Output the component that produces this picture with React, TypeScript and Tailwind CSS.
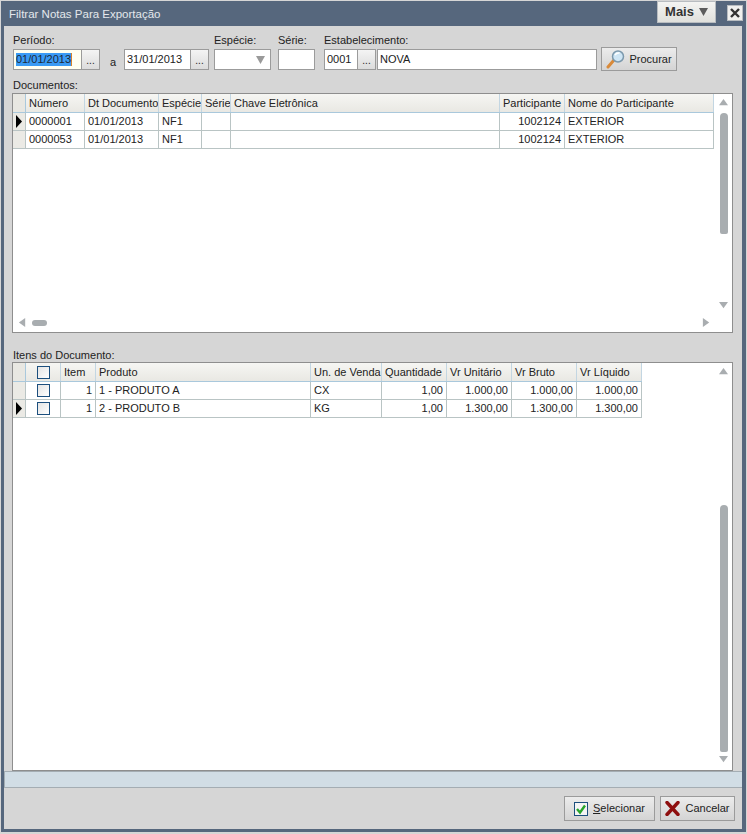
import type { ReactNode } from 'react';

interface Column {
  label: ReactNode;
  width: number;
  align?: 'left' | 'right' | 'center';
}

type Cell = ReactNode;

const docColumns: Column[] = [
  { label: 'Número', width: 59 },
  { label: 'Dt Documento', width: 74 },
  { label: 'Espécie', width: 43 },
  { label: 'Série', width: 29 },
  { label: 'Chave Eletrônica', width: 269 },
  { label: 'Participante', width: 65, align: 'right' },
  { label: 'Nome do Participante', width: 149 },
];

const docRows: Cell[][] = [
  ['0000001', '01/01/2013', 'NF1', '', '', '1002124', 'EXTERIOR'],
  ['0000053', '01/01/2013', 'NF1', '', '', '1002124', 'EXTERIOR'],
];

const CheckBox = () => (
  <span className="block h-[13px] w-[13px] border border-[#1c4f7e] bg-gradient-to-br from-[#e4e4e4] to-white" />
);

const itemColumns: Column[] = [
  { label: <CheckBox />, width: 35, align: 'center' },
  { label: 'Item', width: 35 },
  { label: 'Produto', width: 215 },
  { label: 'Un. de Venda', width: 71 },
  { label: 'Quantidade', width: 65 },
  { label: 'Vr Unitário', width: 65 },
  { label: 'Vr Bruto', width: 65 },
  { label: 'Vr Líquido', width: 65 },
];

const itemAligns: Array<'left' | 'right' | 'center'> = ['center', 'right', 'left', 'left', 'right', 'right', 'right', 'right'];

const itemRows: Cell[][] = [
  [<CheckBox key="a" />, '1', '1 - PRODUTO A', 'CX', '1,00', '1.000,00', '1.000,00', '1.000,00'],
  [<CheckBox key="b" />, '1', '2 - PRODUTO B', 'KG', '1,00', '1.300,00', '1.300,00', '1.300,00'],
];

const Arrow = ({ dir }: { dir: 'up' | 'down' | 'left' | 'right' }) => {
  const points = {
    up: '0,8 5,1 10,8',
    down: '0,1 5,8 10,1',
    left: '8,0 1,5 8,10',
    right: '1,0 8,5 1,10',
  }[dir];
  return (
    <svg className="h-[9px] w-[9px] shrink-0" viewBox="0 0 10 10">
      <polygon fill="#a9adb0" points={points} />
    </svg>
  );
};

const DataGrid = ({
  aligns,
  columns,
  current,
  rows,
}: {
  aligns?: Array<'left' | 'right' | 'center'>;
  columns: Column[];
  current: number;
  rows: Cell[][];
}) => (
  <div className="w-fit">
    <div className="flex h-[19px] border-b border-[#a9c8dc] bg-gradient-to-b from-[#f6f6f3] to-[#e9e8e3]">
      <div className="w-[13px] shrink-0 border-r border-[#a9c8dc] bg-[#e8e7e2]" />
      {columns.map((column, i) => (
        <div
          className={`flex shrink-0 items-center overflow-hidden whitespace-nowrap border-r border-[#c3d6e2] ${
            column.align === 'center' ? 'justify-center' : 'pl-[3px]'
          }`}
          key={i}
          style={{ width: column.width }}
        >
          {column.label}
        </div>
      ))}
    </div>
    {rows.map((row, r) => (
      <div className="flex h-[18px] border-b border-[#b9c4c4]" key={r}>
        <div className="flex w-[13px] shrink-0 items-center justify-center border-r border-[#b9c4c4] bg-[#ebeae5]">
          {r === current && (
            <svg className="h-[13px] w-[8px]" viewBox="0 0 8 13">
              <polygon fill="#000" points="1,0 7,6.5 1,13" />
            </svg>
          )}
        </div>
        {row.map((cell, c) => {
          const align = aligns ? aligns[c] : columns[c].align;
          return (
            <div
              className={`flex shrink-0 items-center overflow-hidden whitespace-nowrap border-r border-[#b9c4c4] px-[3px] ${
                align === 'right' ? 'justify-end' : align === 'center' ? 'justify-center' : ''
              }`}
              key={c}
              style={{ width: columns[c].width }}
            >
              {cell}
            </div>
          );
        })}
      </div>
    ))}
  </div>
);

const VScroll = ({ after, before, thumb }: { after: number; before: number; thumb: number }) => (
  <div className="flex w-[17px] shrink-0 flex-col items-center pt-[4px]">
    <Arrow dir="up" />
    <div className="w-[8px] shrink-0" style={{ height: before }} />
    <div className="w-[8px] shrink-0 rounded-t-[4px] rounded-b-[2px] bg-[#a8adb0]" style={{ height: thumb }} />
    <div className="w-[8px] shrink-0" style={{ height: after }} />
    <Arrow dir="down" />
  </div>
);

const DotsButton = () => (
  <div className="flex h-[21px] w-[18px] shrink-0 items-end justify-center border-y border-r border-[#9b9b9b] bg-gradient-to-b from-[#f4f4f4] to-[#dcdcdc] pb-[3px] text-[10px] leading-[10px]">
    ...
  </div>
);

const Field = ({ label, children, className }: { label: string; children: ReactNode; className: string }) => (
  <div className={className}>
    <div className="h-[15px] whitespace-nowrap leading-[12px]">{label}</div>
    <div className="flex h-[21px]">{children}</div>
  </div>
);

const inputClass = 'flex h-[21px] items-center border border-[#9b9b9b] bg-white px-[2px] whitespace-nowrap';

const Magnifier = () => (
  <svg className="h-[20px] w-[20px]" viewBox="0 0 20 20">
    <path d="M2 18 L8 11" stroke="#d98a3a" strokeLinecap="round" strokeWidth="3" />
    <circle cx="12" cy="7.5" fill="#cfe6f5" r="5.5" stroke="#7c99ad" strokeWidth="1.5" />
    <path d="M9 6 Q10.5 3.5 13.5 4" fill="none" stroke="#fff" strokeWidth="1.5" />
  </svg>
);

const CheckIcon = () => (
  <svg className="h-[14px] w-[14px]" viewBox="0 0 14 14">
    <rect fill="#f4f4f4" height="13" stroke="#1c4f7e" width="13" x="0.5" y="0.5" />
    <path d="M3 7 L6 10.5 L11 3.5" fill="none" stroke="#27a52b" strokeWidth="2.4" />
  </svg>
);

const CrossIcon = () => (
  <svg className="h-[15px] w-[15px]" viewBox="0 0 15 15">
    <path d="M2 1.5 L13 13.5 M13 1.5 L2 13.5" stroke="#8e0f0f" strokeLinecap="round" strokeWidth="3.4" />
  </svg>
);

const FooterButton = ({ children, width }: { children: ReactNode; width: number }) => (
  <div
    className="flex h-[25px] items-center justify-center gap-[5px] border border-[#9b9b9b] bg-gradient-to-b from-[#ececec] to-[#d4d4d4]"
    style={{ width }}
  >
    {children}
  </div>
);

export default function App() {
  return (
    <div className="h-[834px] w-[747px] overflow-hidden bg-[#d6d6d6] pl-[1px] pt-[1px] font-['Liberation_Sans',sans-serif] text-[11px] text-[#222]">
      <div className="flex h-[831px] w-[745px] flex-col border-x-[3px] border-b-[3px] border-r-[4px] border-[#56677d]">
        <div className="flex h-[25px] shrink-0 items-start justify-between bg-[#56677d]">
          <div className="pl-[5px] pt-[6px] text-[11.5px] leading-[15px] text-[#e4e8ec]">
            Filtrar Notas Para Exportação
          </div>
          <div className="flex items-start">
            <div className="flex h-[22px] w-[59px] items-center justify-center gap-[5px] border border-[#b8bcc0] bg-gradient-to-b from-[#f4f4f2] to-[#e0e0dc] text-[13px] font-semibold text-[#333]">
              Mais
              <svg className="h-[8px] w-[9px]" viewBox="0 0 9 8">
                <polygon fill="#5c5c5c" points="0,0 9,0 4.5,8" />
              </svg>
            </div>
            <div className="ml-[11px] mr-[-1px] mt-[4px] flex h-[16px] w-[16px] items-center justify-center border border-[#b8bcc0] bg-[#f0f0ee]">
              <svg className="h-[10px] w-[10px]" viewBox="0 0 10 10">
                <path d="M1 1 L9 9 M9 1 L1 9" stroke="#333" strokeWidth="2.4" />
              </svg>
            </div>
          </div>
        </div>

        <div className="flex min-h-0 flex-1 flex-col bg-[#d6d6d6]">
          <div className="flex h-[38px] shrink-0 items-start pl-[9px] pt-[8px]">
            <Field className="w-[96px]" label="Período:">
              <div className="flex h-[21px] w-[69px] items-center border border-[#9b9b9b] bg-[#fffff2] px-[2px]">
                <span className="border-r border-[#d9822b] bg-[#3a9bf5] leading-[13px] text-[#1d2a38]">01/01/2013</span>
              </div>
              <DotsButton />
            </Field>
            <div className="w-[15px] pl-[1px] pt-[20px] leading-[16px]">a</div>
            <Field className="w-[90px]" label=" ">
              <div className={`${inputClass} w-[67px]`}>31/01/2013</div>
              <DotsButton />
            </Field>
            <Field className="w-[64px]" label="Espécie:">
              <div className={`${inputClass} w-[57px] justify-end pr-[5px]`}>
                <svg className="h-[8px] w-[9px]" viewBox="0 0 9 8">
                  <polygon fill="#9a9a9a" points="0,0 9,0 4.5,8" />
                </svg>
              </div>
            </Field>
            <Field className="w-[46px]" label="Série:">
              <div className={`${inputClass} w-[37px]`} />
            </Field>
            <Field className="w-[277px]" label="Estabelecimento:">
              <div className={`${inputClass} w-[34px]`}>0001</div>
              <DotsButton />
              <div className={`${inputClass} ml-[1px] w-[220px]`}>NOVA</div>
            </Field>
            <div className="mt-[13px] flex h-[24px] w-[76px] shrink-0 items-center justify-center gap-[3px] border border-[#9b9b9b] bg-gradient-to-b from-[#ececec] to-[#d4d4d4]">
              <Magnifier />
              Procurar
            </div>
          </div>

          <div className="mt-[15px] h-[14px] shrink-0 pl-[9px] leading-[13px]">Documentos:</div>
          <div className="ml-[8px] flex h-[240px] w-[721px] shrink-0 border border-[#8e8e8e] bg-white">
            <div className="flex w-[702px] shrink-0 flex-col">
              <DataGrid columns={docColumns} current={0} rows={docRows} />
              <div className="mb-[5px] mt-auto flex items-center pl-[5px] pr-[4px]">
                <Arrow dir="left" />
                <div className="ml-[5px] h-[6px] w-[15px] rounded-[3px] bg-[#a8adb0]" />
                <div className="ml-auto">
                  <Arrow dir="right" />
                </div>
              </div>
            </div>
            <VScroll after={67} before={6} thumb={121} />
          </div>

          <div className="mt-[16px] h-[13px] shrink-0 pl-[9px] leading-[13px]">Itens do Documento:</div>
          <div className="ml-[8px] flex h-[409px] w-[721px] shrink-0 border border-[#8e8e8e] bg-white">
            <div className="w-[702px] shrink-0">
              <DataGrid aligns={itemAligns} columns={itemColumns} current={1} rows={itemRows} />
            </div>
            <VScroll after={3} before={129} thumb={247} />
          </div>

          <div className="h-[17px] shrink-0 border-y border-l border-[#a4adb3] bg-[#d1dde5]" />

          <div className="flex flex-1 items-start justify-end gap-[5px] pr-[7px] pt-[8px]">
            <FooterButton width={91}>
              <CheckIcon />
              <span>
                <span className="underline">S</span>elecionar
              </span>
            </FooterButton>
            <FooterButton width={75}>
              <CrossIcon />
              Cancelar
            </FooterButton>
          </div>
        </div>
      </div>
    </div>
  );
}
